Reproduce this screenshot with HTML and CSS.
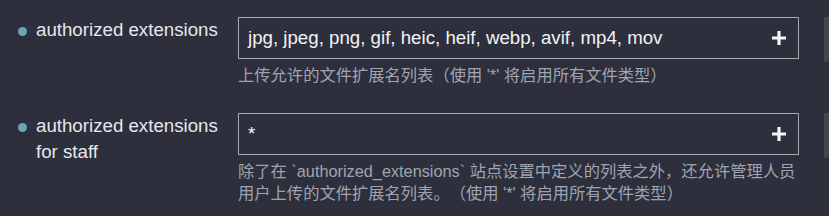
FILE: index.html
```html
<!DOCTYPE html>
<html lang="zh-CN">
<head>
    <meta charset="UTF-8">
    <meta name="viewport" content="width=device-width, initial-scale=1.0">
    <title>Site settings - files</title>
    <link rel="stylesheet" href="styles.css">
</head>
<body>
    <div class="setting">
        <div class="setting-label">
            <span class="dot"></span>
            <h3>authorized extensions</h3>
        </div>
        <div class="setting-value">
            <div class="list-input">
                <span class="list-text">jpg, jpeg, png, gif, heic, heif, webp, avif, mp4, mov</span>
                <button class="add-btn" title="添加"><svg width="16" height="16" viewBox="0 0 16 16"><path d="M8 1v14M1 8h14" stroke="currentColor" stroke-width="3.2"/></svg></button>
            </div>
            <div class="desc">上传允许的文件扩展名列表（使用 '*' 将启用所有文件类型）</div>
        </div>
        <div class="setting-side"></div>
    </div>

    <div class="setting">
        <div class="setting-label">
            <span class="dot"></span>
            <h3>authorized extensions for staff</h3>
        </div>
        <div class="setting-value">
            <div class="list-input">
                <span class="list-text">*</span>
                <button class="add-btn" title="添加"><svg width="16" height="16" viewBox="0 0 16 16"><path d="M8 1v14M1 8h14" stroke="currentColor" stroke-width="3.2"/></svg></button>
            </div>
            <div class="desc">除了在 `authorized_extensions` 站点设置中定义的列表之外，还允许管理人员用户上传的文件扩展名列表。（使用 '*' 将启用所有文件类型）</div>
        </div>
        <div class="setting-side"></div>
    </div>
</body>
</html>
```

FILE: styles.css
```css
html, body {
    overflow: hidden;
}
body {
    margin: 0;
    padding: 17px 0 0 18px;
    background: #2d2f3d;
    color: #e6e7ea;
    font-family: "Liberation Sans", Arial, "Noto Sans CJK SC", sans-serif;
}
.setting {
    display: flex;
    align-items: flex-start;
}
.setting + .setting {
    margin-top: 26px;
}
.setting-label {
    display: flex;
    align-items: flex-start;
    width: 220px;
    flex-shrink: 0;
}
.dot {
    width: 9px;
    height: 9px;
    margin-top: 10px;
    margin-right: 9px;
    border-radius: 50%;
    background: #65a8bb;
    flex-shrink: 0;
}
.setting-label h3 {
    margin: 0;
    width: 192px;
    font-size: 18.7px;
    font-weight: normal;
    line-height: 26px;
}
.setting-value {
    width: 561px;
    flex-shrink: 0;
}
.list-input {
    display: flex;
    align-items: center;
    height: 42px;
    box-sizing: border-box;
    border: 1px solid #a6a7ad;
    padding: 0 11px 0 9px;
}
.list-text {
    flex: 1;
    font-size: 18.7px;
    color: #f2f2f4;
}
.add-btn {
    display: flex;
    padding: 0;
    border: none;
    background: none;
    color: #f4f4f6;
    cursor: pointer;
}
.desc {
    margin-top: 5px;
    font-family: "Liberation Sans", "Noto Sans CJK SC", sans-serif;
    font-size: 16.3px;
    line-height: 22.5px;
    color: #a0a4b0;
    text-spacing-trim: space-all;
}
.setting-side {
    width: 40px;
    height: 45px;
    margin-left: 25px;
    flex-shrink: 0;
    background: #434551;
}
```
